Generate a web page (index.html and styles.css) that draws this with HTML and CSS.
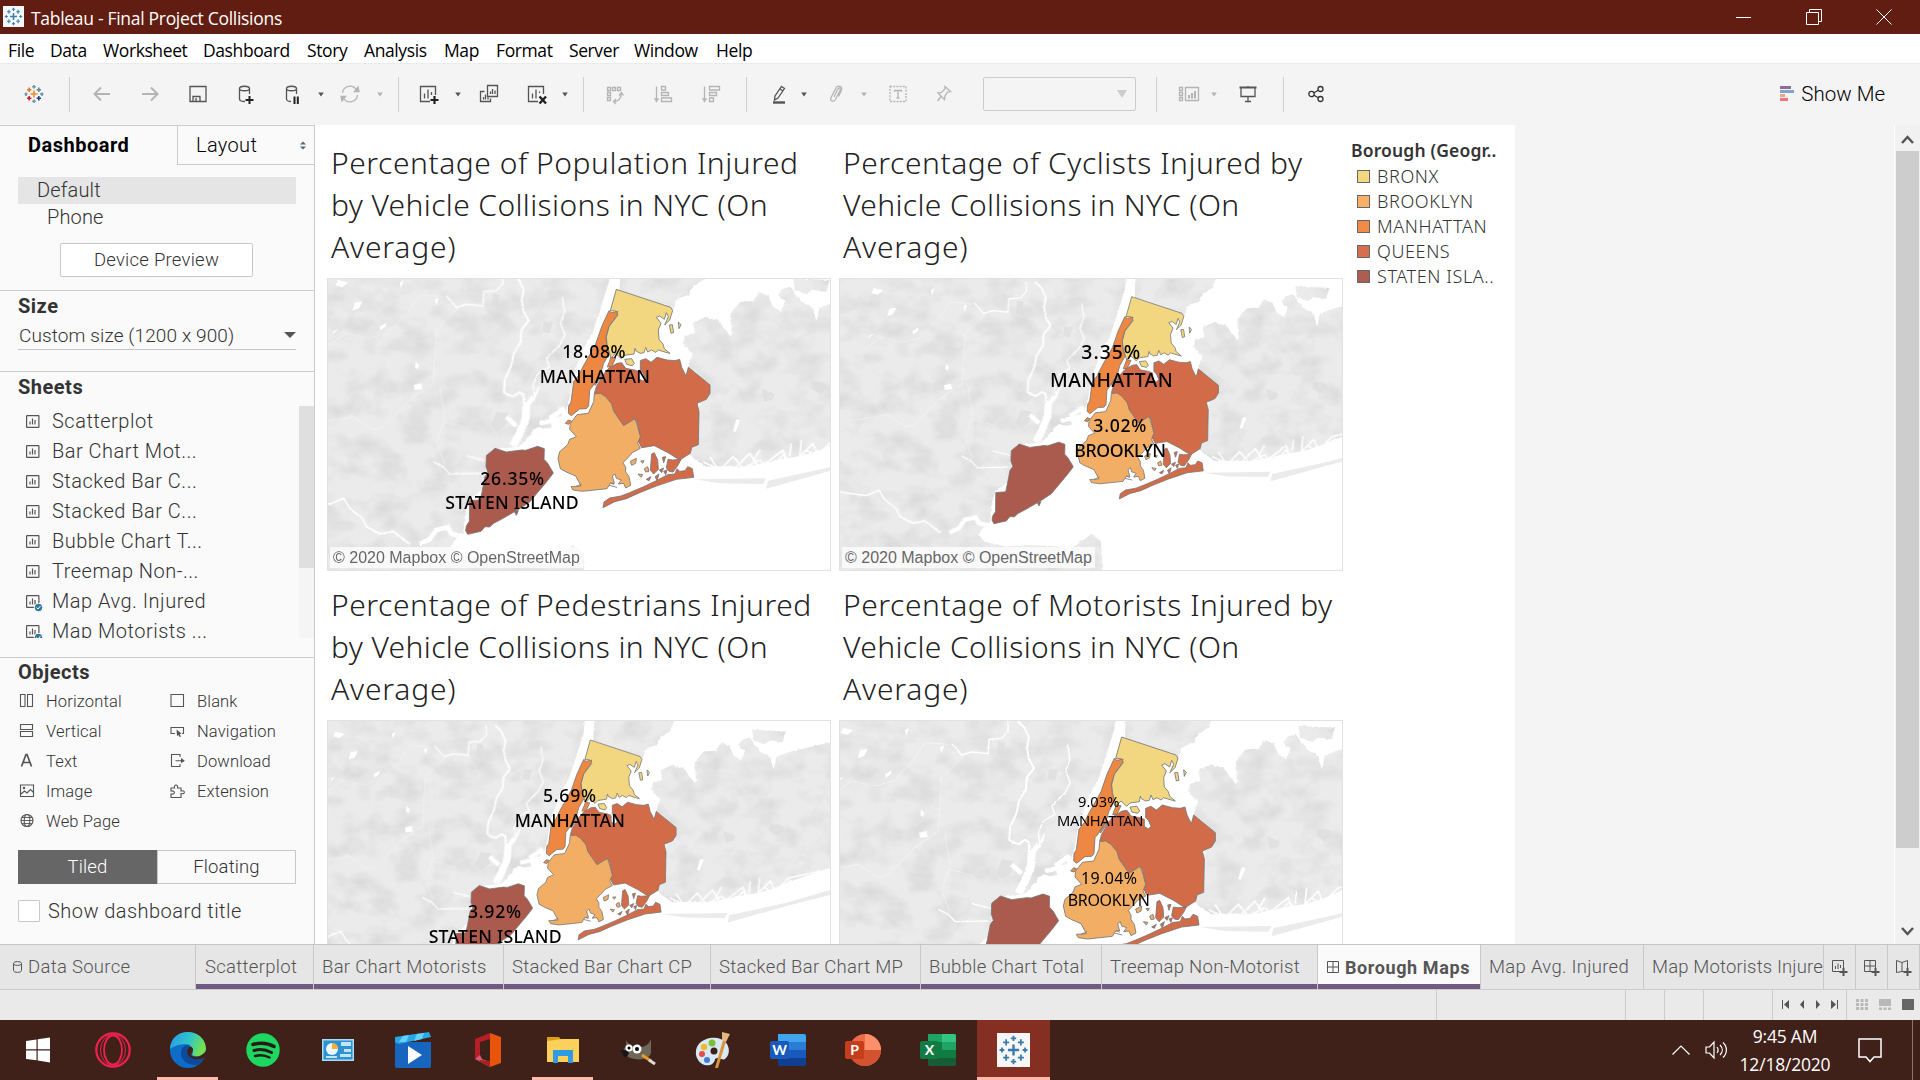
FILE: index.html
```html
<!DOCTYPE html>
<html lang="en">
<head>
<meta charset="utf-8">
<title>Tableau - Final Project Collisions</title>
<link rel="stylesheet" href="styles.css">
</head>
<body>
<svg class="defs" width="0" height="0">
  <defs>
    <filter id="terrain" x="0" y="0" width="100%" height="100%" color-interpolation-filters="sRGB">
      <feTurbulence type="fractalNoise" baseFrequency="0.09" numOctaves="3" seed="4" result="rough"/>
      <feDisplacementMap in="SourceGraphic" in2="rough" scale="9" xChannelSelector="R" yChannelSelector="G" result="land"/>
      <feTurbulence type="fractalNoise" baseFrequency="0.012 0.016" numOctaves="3" seed="9"/>
      <feColorMatrix values="0 0 0 0 0.8  0 0 0 0 0.8  0 0 0 0 0.8  1.2 0 0 0 -0.5" result="shade"/>
      <feComposite in="shade" in2="land" operator="in" result="s"/>
      <feMerge><feMergeNode in="land"/><feMergeNode in="s"/></feMerge>
    </filter>
    <filter id="coast" x="-5%" y="-5%" width="110%" height="110%">
      <feTurbulence type="fractalNoise" baseFrequency="0.12" numOctaves="2" seed="7"/>
      <feDisplacementMap in="SourceGraphic" scale="7" xChannelSelector="R" yChannelSelector="G"/>
    </filter>
    <g id="nyc">
      <g filter="url(#terrain)" fill="#ebebeb">
        <path d="M-100-60H876L868 35 846 105 820 185 790 240 763 310 748 390 738 425 715 410 728 440 690 450 700 480 650 470 600 530 520 538 500 560 500 610 492 655 448 690 436 730 432 790 412 795 395 830 412 850 480 868 560 862 700 870 760 826 790 850 800 980H-100Z"/>
        <path d="M904-60H1190L1150 30 1120 50 1105 75 1070 90 1060 125 1050 112 900 60Z"/>
        <path d="M1106 292 1116 250 1090 222 1096 198 1126 190 1120 158 1158 140 1196 152 1226 190 1242 215 1240 255 1224 225 1236 190 1232 130 1262 96 1302 92 1320 66 1345 76 1360 110 1385 125 1395 92 1375 75 1385 58 1412 50 1445 95 1480 115 1490 155 1500 112 1550 95 1700 60V470L1534 525 1480 552 1400 565 1280 590 1160 590 1110 555 1140 400 1170 345Z"/>
        <path d="M1420 24 1530 30 1520 65 1480 60 1460 72 1425 60Z"/>
      </g>
      <path d="M1125 628 1340 625 1330 642 1200 640ZM1345 632 1530 592 1690 545 1690 562 1530 603 1340 656Z" fill="#ebebeb"/>
      <g fill="#dedede" opacity=".75"><path d="M530 425 565 430 560 465 530 485 515 465ZM672 155 700 155 690 190 668 185ZM520 70 540 75 535 120 515 110ZM1325 355 1365 372 1360 388 1335 395ZM1480 335 1510 335 1525 350 1500 372 1475 355Z"/></g>
      <g fill="none" stroke="#fff" stroke-linejoin="round" filter="url(#coast)">
        <path stroke-width="6" d="M578 10 598 30 612 60 606 90 612 125 627 152 605 180 603 215 582 250 575 285 555 330 553 368 580 380 600 366 612 375 612 402 640 392 658 350"/>
        <path stroke-width="24" d="M620 405 618 445 600 490 580 528"/>
        <path stroke-width="14" d="M560 440 590 468M640 380 620 410M735 415 690 445M730 445 660 460M735 470 650 490"/>
        <path stroke-width="4" d="M380 78 410 112 440 103 490 108 492 65 530 62 550 40 548 10M728 80 735 125 722 160 736 195 720 225 680 265 690 290 655 310 640 345 645 380M340 575 370 590 390 612 490 610M440 558 500 572"/>
        <path stroke-width="1.500" opacity=".8" d="M20 230 80 190 150 205 205 190 270 120 300 75 370 80M-20 460 100 440 160 480 190 470 270 390 340 340 350 180 420 110M360 350 375 440 350 520 375 580M375 455 445 475"/>
        <path stroke-width="5" d="M-60 690 30 702 72 685 90 715 128 745 140 770 182 792 220 784 270 822"/>
        <path stroke-width="14" d="M300 822 330 808 350 780 385 772 395 792 440 800"/>
        <path stroke-width="5" d="M1150 575 1200 600 1240 560 1270 595 1320 570 1350 600 1390 555 1420 580 1460 540 1490 560 1540 510 1680 480M1160 605 1230 590 1290 610 1370 580 1440 595 1530 560 1660 520M1170 560 1190 590 1240 600 1290 550 1320 595 1390 540 1410 590 1480 520 1500 570 1550 520M1300 575 1320 540M1410 560 1414 520M1440 560 1445 510"/>
        <path stroke-width="14" d="M1140 605 1260 600 1400 580 1540 535 1690 490"/>
      </g>
      <path fill="#fff" d="M55 30 85 38 68 52 48 46ZM105 98 128 94 118 115 98 122ZM180 170 200 158 198 170 182 180ZM282 345 305 340 308 358 285 360ZM240 38 252 30 244 55ZM345 88 358 84 350 105ZM40 185 58 175 40 192ZM288 275 299 285 294 298 286 292ZM1250 448 1262 450 1248 486 1240 484Z"/>
      <g stroke="#777" stroke-width="2.6" stroke-linejoin="round">
        <path fill="#f2d780" d="M890 58 1053 112 1059 122 1050 150 1035 165 1046 140 1040 128 1034 148 1020 138 1010 142 1024 160 1016 180 1018 208 1030 222 1034 236 1051 250 1042 248 1016 240 1008 247 996 240 984 246 978 232 973 248 962 250 949 243 946 235 943 252 915 256 905 266 888 250 874 264 862 225 860 200 868 170 895 135 888 123 872 122Z"/>
        <path fill="#f2d780" d="M915 268 936 266 944 280 938 287 921 283ZM1049 165 1058 164 1062 188 1054 190ZM1076 156 1084 164 1078 176Z"/>
        <path fill="#ee8742" d="M868 122 876 128 894 124 892 136 868 168 859 200 862 230 869 250 852 280 844 308 822 345 810 360 807 408 800 416 780 417 755 437 746 430 747 408 754 396 762 335 778 315 790 290 828 222 846 170ZM874 262 888 264 876 290 863 291ZM846 308 850 312 827 346 824 341Z"/>
        <path fill="#ee8742" d="M737 460 746 450 755 453 747 463Z"/>
        <path fill="#d26b48" d="M824 370 830 350 852 312 868 294 892 280 906 278 918 295 945 300 958 305 958 326 970 334 978 326 970 308 962 300 962 272 978 266 994 277 1012 262 1042 270 1066 272 1080 268 1086 292 1099 318 1106 292 1171 345 1171 370 1160 388 1132 400 1138 425 1136 524 1116 532 1112 550 1080 570 1045 548 1004 527 966 533 954 510 962 500 952 455 944 448 910 467 886 430 870 402 856 382 842 372Z"/>
        <path fill="#f3ae66" d="M842 370 858 380 876 402 882 424 912 467 946 446 954 470 962 500 954 520 962 535 938 548 924 564 910 578 918 592 918 606 928 620 933 646 918 654 912 640 896 642 905 630 890 625 886 612 878 618 884 640 872 640 862 656 788 664 760 660 754 650 784 648 768 618 740 606 722 596 715 565 720 545 744 524 750 508 770 500 750 478 752 460 772 434 806 430 822 395 824 372Z"/>
        <path fill="#f3ae66" d="M932 574 950 565 948 580 936 586ZM955 612 969 614 964 622ZM974 596 984 590 988 604 978 606ZM963 573 973 572 969 580Z"/>
        <path fill="#d26b48" d="M996 552 1004 548 1014 570 1016 598 1002 612 992 600ZM1045 568 1058 570 1084 568 1076 584 1060 606 1048 604 1040 594ZM1019 600 1032 594 1026 608ZM1032 604 1042 600 1038 614ZM980 628 994 620 988 632ZM1006 620 1018 612 1012 632ZM1028 562 1038 560 1032 578Z"/>
        <path fill="#d26b48" d="M1072 596 1080 604 1096 602 1104 590 1118 596 1122 622 1070 628 1010 648 960 668 920 686 885 695 850 713 853 696 870 684 904 678 930 668 972 650 1010 632 1044 614 1066 612Z"/>
        <path fill="#ab5b4e" d="M500 557 526 535 560 546 606 540 618 541 654 529 674 536 673 568 684 580 701 609 682 634 630 696 600 716 545 748 522 760 510 771 496 770 484 784 444 793 438 782 440 768 449 754 450 692 482 690 488 662 496 620 505 608 499 590ZM584 724 596 722 590 736Z"/>
        <path fill="none" d="M872 638 884 644M868 646 892 652M768 650 786 642"/>
      </g>
    </g>
    <g id="tableau-mark" fill="none" stroke="currentColor">
      <path stroke-width="1.9" d="M12 7.6V16.4M7.6 12H16.4"/>
      <path stroke-width="1.4" d="M12 .8V5M9.9 2.9H14.1M12 19V23.2M9.9 21.1H14.1M2.9 10V14M1 12H4.8M21.1 10V14M19.2 12H23M6.2 3.6V8.4M3.8 6H8.6M17.8 3.6V8.4M15.4 6H20.2M6.2 15.6V20.4M3.8 18H8.6M17.8 15.6V20.4M15.4 18H20.2"/>
    </g>
    <g id="sheet" fill="none" stroke="#555" stroke-width="1.2"><rect x=".6" y=".6" width="12.3" height="11.8" rx=".5"/><path d="M4 9.5V6.5M6.5 9.5V3.6M9 9.5V5"/></g>
    <path id="caret" d="M2.200 2.500H7.800L5 6.500Z" fill="currentColor"/>
  </defs>
</svg>

<header class="titlebar">
  <span class="app-icon"><svg width="19" height="19" viewBox="0 0 24 24"><use href="#tableau-mark"/></svg></span>
  <span class="app-name">Tableau - Final Project Collisions</span>
  <div class="window-buttons">
    <svg width="16" height="16" viewBox="0 0 16 16"><path d="M0 8.5H15"/></svg>
    <svg width="16" height="16" viewBox="0 0 16 16"><path d="M.5 3.5H12.5V15.5H.5ZM3.5 3.5V.5H15.5V12.5H12.5"/></svg>
    <svg width="16" height="16" viewBox="0 0 16 16"><path d="M.5.5 15.5 15.5M15.5.5.5 15.5"/></svg>
  </div>
</header>

<nav class="menubar">
  <span class="w-file">File</span><span class="w-data">Data</span><span class="w-worksheet">Worksheet</span><span class="w-dashboard">Dashboard</span><span class="w-story">Story</span><span class="w-analysis">Analysis</span><span class="w-map">Map</span><span class="w-format">Format</span><span class="w-server">Server</span><span class="w-window">Window</span><span>Help</span>
</nav>

<div class="toolbar">
  <svg class="ico m22" viewBox="0 0 24 24"><g fill="none" stroke-width="1.6"><path stroke="#eb8b2d" d="M12 8.5V15.5M8.5 12H15.5"/><path stroke="#6b9aa8" d="M12 3V6.5M10.2 4.8H13.8M20 10.5V14M18 12H21.5"/><path stroke="#e8762c" d="M7.2 5.5V10M5 7.7H9.4"/><path stroke="#5b879b" d="M16.8 5.5V10M14.6 7.7H19"/><path stroke="#c72035" d="M7.2 14V18.5M5 16.3H9.4"/><path stroke="#1f457e" d="M16.8 14V18.5M14.6 16.3H19"/><path stroke="#7199a6" d="M12 17.5V21M10.2 19.3H13.8M4 10.5V14M2.5 12H5.5"/></g></svg>
  <i class="sep m23"></i>
  <svg class="ico dim m20" viewBox="0 0 24 24"><path stroke-width="2" d="M20 12H5M11 5.5 4.5 12 11 18.5"/></svg>
  <svg class="ico dim m24" viewBox="0 0 24 24"><path stroke-width="2" d="M4 12H19M13 5.5 19.5 12 13 18.5"/></svg>
  <svg class="ico m24" viewBox="0 0 24 24"><path d="M4 4.5H20V19.5H4ZM7 19V14.5H14V19M10 16V19"/></svg>
  <svg class="ico m24" viewBox="0 0 24 24"><path d="M5.500 6.500C5.500 3.500 15.500 3.500 15.500 6.500V12M5.500 6.500C5.500 9.500 15.500 9.500 15.500 6.500M5.500 6.500V17C5.500 18.500 8 19.500 11 19.500"/><path stroke="#222" stroke-width="2" d="M15.500 14V22M11.500 18H19.500"/></svg>
  <svg class="ico m22" viewBox="0 0 24 24"><path d="M6.500 6.500C6.500 3.500 16.500 3.500 16.500 6.500V12M6.500 6.500C6.500 9.500 16.500 9.500 16.500 6.500M6.500 6.500V17C6.500 18.500 9 19.500 11 19.500"/><path stroke="#222" stroke-width="2" d="M14.500 14.500V22M17.800 14.500V22"/></svg>
  <svg class="car m12" viewBox="0 0 10 9"><use href="#caret"/></svg>
  <svg class="ico dim m12" viewBox="0 0 24 24"><path d="M4.500 11A7.500 7.500 0 0 1 18.500 8M19.500 13A7.500 7.500 0 0 1 5.500 16"/><path fill="currentColor" d="M16.500 9.500H21L20 5ZM7.500 14.500H3L4 19Z"/></svg>
  <svg class="car dim m13" viewBox="0 0 10 9"><use href="#caret"/></svg>
  <i class="sep m13"></i>
  <svg class="ico m17" viewBox="0 0 24 24"><path d="M14 19.500H4.500V4.500H19.500V13M8.500 16.500V11.500M12 16.500V7.500M15.500 13V10"/><path stroke="#222" stroke-width="2.200" d="M18.500 14V22M14.500 18H22.500"/></svg>
  <svg class="car m13" viewBox="0 0 10 9"><use href="#caret"/></svg>
  <svg class="ico m14" viewBox="0 0 24 24"><path d="M10.500 3.500H20.500V14.500H10.500ZM7.500 9.500H3.500V19.500H13.500V16.500M13.500 12V9.500M15.500 12V7M18 12V8.500M6.500 17.500V15M8.500 17.500V12.500M11 17.500V15.500"/></svg>
  <svg class="ico m23" viewBox="0 0 24 24"><path d="M14 19.500H4.500V4.500H19.500V12M8.500 16.500V11.500M12 16.500V7.500M15.500 11V9.500"/><path stroke="#222" stroke-width="2.400" d="M15.500 14.500 22 21.500M22 14.500 15.500 21.500"/></svg>
  <svg class="car m12" viewBox="0 0 10 9"><use href="#caret"/></svg>
  <i class="sep m13"></i>
  <svg class="ico dim m19" viewBox="0 0 24 24"><path d="M4.500 5.500H7.500V8.500H4.500ZM9.500 5.500H12.500V8.500H9.500ZM14.500 5.500H17.500V8.500H14.500ZM4.500 10.500H7.500V13.500H4.500ZM4.500 15.500H7.500V18.500H4.500ZM11 19.500C15 19.500 18 17 18.500 11M16 13.500 18.500 10.500 20.500 13.500M13 17 10.500 19.500 13 22"/></svg>
  <svg class="ico dim m24" viewBox="0 0 24 24"><path d="M5.500 4.500V18M3.500 16 5.500 19.500 7.500 16M10.500 4.500H14.500V8H10.500ZM10.500 10.500H17.500V13.500H10.500ZM10.500 16H20.500V19.500H10.500Z"/></svg>
  <svg class="ico dim m24" viewBox="0 0 24 24"><path d="M5.500 4.500V18M3.500 16 5.500 19.500 7.500 16M10.500 4.500H20.500V8H10.500ZM10.500 10.500H17.500V13.500H10.500ZM10.500 16H14.500V19.500H10.500Z"/></svg>
  <i class="sep m23"></i>
  <svg class="ico m20" viewBox="0 0 24 24"><path d="M14.500 4.500 17.500 6.500 11 16 7.500 18 8 14ZM13 7 16 9"/><path stroke-width="2.400" d="M6 20.500H18"/></svg>
  <svg class="car m8" viewBox="0 0 10 9"><use href="#caret"/></svg>
  <svg class="ico dim m15" viewBox="0 0 24 24"><path d="M10 15 13.500 7.500C15 5 17 6 16 8.500L11.500 17.500C9.500 20.500 5.500 19 7 15.500L12 6C13.500 3 18.500 4 17.500 8L14.500 14.500"/></svg>
  <svg class="car dim m11" viewBox="0 0 10 9"><use href="#caret"/></svg>
  <svg class="ico dim m17" viewBox="0 0 24 24"><path stroke-dasharray="2 1.200" d="M4 4.500H20V19.500H4Z"/><path d="M8.500 10V8.500H15.500V10M12 8.500V16M10.500 16H13.500"/></svg>
  <svg class="ico dim m22" viewBox="0 0 24 24"><path d="M13 4.500 18.500 9.500 15.500 10 13 14 12.500 17.500 6 11 9.500 10.500 13 7ZM9 14.500 5.500 19"/></svg>
  <div class="fit-box m27"><svg width="12" height="9" viewBox="0 0 12 9"><path d="M1 0H11L6 8Z" fill="#ccc"/></svg></div>
  <i class="sep m20"></i>
  <svg class="ico dim m20" viewBox="0 0 24 24"><path d="M2.500 5.500H5.500V8.500H2.500ZM2.500 10.500H5.500V13.500H2.500ZM2.500 15.500H5.500V18.500H2.500ZM8.500 5.500H21.500V18.500H8.500Z"/><path stroke-width="2" d="M12 16.500V13M15 16.500V11M18 16.500V9"/></svg>
  <svg class="car dim m8" viewBox="0 0 10 9"><use href="#caret"/></svg>
  <svg class="ico m17" viewBox="0 0 24 24"><path stroke-width="2" d="M3.500 5.500H20.500"/><path d="M5 6V14.500H19V6M12 4V6M12 14.500V19.500M9 19.500H15"/></svg>
  <i class="sep m23"></i>
  <svg class="ico dark m20" viewBox="0 0 24 24"><circle cx="7.500" cy="12" r="2.700"/><circle cx="16.500" cy="7" r="2.500"/><circle cx="16.500" cy="17" r="2.500"/><path d="M10 10.700 14.300 8.200M10 13.300 14.300 15.800"/></svg>
  <div class="show-me"><svg width="15" height="17" viewBox="0 0 15 17"><path fill="#8e6e96" d="M0 0H11V3H0Z"/><path fill="#7fa5cc" d="M0 4H14V7H0Z"/><path fill="#f3a57e" d="M0 8H5V11H0Z"/><path fill="#f8717d" d="M0 12H8V15H0Z"/></svg><span>Show Me</span></div>
</div>

<main class="workspace">
  <aside class="sidebar">
    <div class="panel-tabs">
      <div class="ptab active">Dashboard</div>
      <div class="ptab other"><span>Layout</span><svg width="6" height="9" viewBox="0 0 6 9"><path fill="#567" d="M0 3.500H6L3 .5ZM0 5.500H6L3 8.500Z"/></svg></div>
    </div>
    <section class="devices">
      <div class="device selected">Default</div>
      <div class="device phone">Phone</div>
      <button class="preview">Device Preview</button>
    </section>
    <section class="size">
      <h2>Size</h2>
      <div class="size-select"><span>Custom size (1200 x 900)</span><svg width="12" height="8" viewBox="0 0 12 8"><path fill="#555" d="M0 1H12L6 7Z"/></svg></div>
    </section>
    <section class="sheets">
      <h2>Sheets</h2>
      <div class="sheet-list">
        <ul>
          <li><svg viewBox="0 0 18 17"><use href="#sheet"/></svg><span>Scatterplot</span></li>
          <li><svg viewBox="0 0 18 17"><use href="#sheet"/></svg><span>Bar Chart Mot...</span></li>
          <li><svg viewBox="0 0 18 17"><use href="#sheet"/></svg><span>Stacked Bar C...</span></li>
          <li><svg viewBox="0 0 18 17"><use href="#sheet"/></svg><span>Stacked Bar C...</span></li>
          <li><svg viewBox="0 0 18 17"><use href="#sheet"/></svg><span>Bubble Chart T...</span></li>
          <li><svg viewBox="0 0 18 17"><use href="#sheet"/></svg><span>Treemap Non-...</span></li>
          <li><svg viewBox="0 0 18 17"><use href="#sheet"/><circle cx="12.500" cy="12.500" r="4.200" fill="#35789b" stroke="#fafafa"/><path d="M10.500 12.500 12 14 14.500 11" fill="none" stroke="#fff"/></svg><span>Map Avg. Injured</span></li>
          <li><svg viewBox="0 0 18 17"><use href="#sheet"/><circle cx="12.500" cy="12.500" r="4.200" fill="#35789b" stroke="#fafafa"/><path d="M10.500 12.500 12 14 14.500 11" fill="none" stroke="#fff"/></svg><span>Map Motorists ...</span></li>
        </ul>
        <div class="list-scroll"><i></i></div>
      </div>
    </section>
    <section class="objects">
      <h2>Objects</h2>
      <div class="object-grid">
        <div><svg viewBox="0 0 16 16"><path d="M1.500 1.500H6V13.500H1.500ZM8.500 1.500H13.500V13.500H8.500Z"/></svg>Horizontal</div>
        <div><svg viewBox="0 0 16 16"><path d="M1 1.500H13.500V13.500H1Z"/></svg>Blank</div>
        <div><svg viewBox="0 0 16 16"><path d="M1.500 1.500H13.500V6.500H1.500ZM1.500 8.500H13.500V13.500H1.500Z"/></svg>Vertical</div>
        <div><svg viewBox="0 0 16 16"><path d="M5 10.500H1V4.500H13.500V10.500H12"/><path fill="#555" stroke="none" d="M6.500 6.500 11.500 10.500 9.800 11.200 11 13.500 9.500 14 8.500 12 7 13Z"/></svg>Navigation</div>
        <div><svg viewBox="0 0 16 16"><path stroke-width="1.700" d="M2.500 13.500 7 1.500H8L12.500 13.500M4 9.500H11"/></svg>Text</div>
        <div><svg viewBox="0 0 16 16"><path d="M10 4V1.500H1.500V13.500H10V11M5.500 7.700H14"/><path fill="#555" stroke="none" d="M11 5 14.800 7.700 11 10.300Z"/></svg>Download</div>
        <div><svg viewBox="0 0 16 16"><path d="M1.500 2H14.500V13.500H1.500ZM2 11 5.500 8 8 10 11.500 6.500 14 9"/><circle cx="5" cy="5" r=".7"/></svg>Image</div>
        <div><svg viewBox="0 0 16 16"><path d="M1 5H4.500C3.500 1 8.500 1 7.500 5H11V8C15.500 6.500 15.500 12 11 10.500V14.500H1V11C5.500 12 5.500 7 1 8Z"/></svg>Extension</div>
        <div><svg viewBox="0 0 16 16"><circle cx="8" cy="7.500" r="6"/><ellipse cx="8" cy="7.500" rx="2.800" ry="6"/><path d="M2 7.500H14M3 4.500H13M3 10.500H13" stroke-width=".9"/></svg>Web Page</div>
      </div>
      <div class="toggle"><span class="on">Tiled</span><span>Floating</span></div>
      <label class="check"><i></i><span>Show dashboard title</span></label>
    </section>
  </aside>

  <div class="canvas">
    <div class="dashboard">
      <div class="maps">
        <article class="card">
          <h1><span class="t1">Percentage of Population Injured</span><br><span class="t2">by Vehicle Collisions in NYC (On</span><br><span class="t3">Average)</span></h1>
          <div class="map"><svg width="502" height="291" viewBox="25 27 1506 873"><use href="#nyc"/>
            <g class="lbl s50"><text x="728" y="264" textLength="190">18.08%</text><text x="660" y="340" textLength="331">MANHATTAN</text><text x="482" y="645" textLength="191">26.35%</text><text x="377" y="718" textLength="400">STATEN ISLAND</text></g></svg>
            <span class="credit">© 2020 Mapbox © OpenStreetMap</span></div>
        </article>
        <article class="card">
          <h1><span class="t1">Percentage of Cyclists Injured by</span><br><span class="t2">Vehicle Collisions in NYC (On</span><br><span class="t3">Average)</span></h1>
          <div class="map"><svg width="502" height="291" viewBox="30 27 1506 873"><g transform="translate(80.4 26.300) scale(.9265)"><use href="#nyc"/></g>
            <g class="lbl s56"><text x="754" y="266" textLength="177">3.35%</text><text x="660" y="350" textLength="368">MANHATTAN</text></g><g class="lbl s50"><text x="790" y="486" textLength="159">3.02%</text><text x="733" y="560" textLength="275">BROOKLYN</text></g></svg>
            <span class="credit">© 2020 Mapbox © OpenStreetMap</span></div>
        </article>
        <article class="card">
          <h1><span class="t1">Percentage of Pedestrians Injured</span><br><span class="t2">by Vehicle Collisions in NYC (On</span><br><span class="t3">Average)</span></h1>
          <div class="map"><svg width="502" height="291" viewBox="25 33 1506 873"><g transform="translate(-2.800 36.900) scale(.9155)"><use href="#nyc"/></g>
            <g class="lbl s50"><text x="670" y="276" textLength="159">5.69%</text><text x="585" y="351" textLength="331">MANHATTAN</text><text x="445" y="624" textLength="159">3.92%</text><text x="327" y="699" textLength="399">STATEN ISLAND</text></g></svg></div>
        </article>
        <article class="card">
          <h1><span class="t1">Percentage of Motorists Injured by</span><br><span class="t2">Vehicle Collisions in NYC (On</span><br><span class="t3">Average)</span></h1>
          <div class="map"><svg width="502" height="291" viewBox="30 33 1506 873"><g transform="translate(-15 23)"><use href="#nyc"/></g>
            <g class="lbl s42"><text x="744" y="292" textLength="124">9.03%</text><text x="681" y="348" textLength="259">MANHATTAN</text></g><g class="lbl s46"><text x="753" y="522" textLength="168">19.04%</text><text x="713" y="588" textLength="247">BROOKLYN</text></g></svg></div>
        </article>
      </div>
      <div class="legend">
        <h3>Borough (Geogr..</h3>
        <ul><li><i class="bronx"></i>BRONX</li><li><i class="brooklyn"></i>BROOKLYN</li><li><i class="manhattan"></i>MANHATTAN</li><li><i class="queens"></i>QUEENS</li><li><i class="staten"></i>STATEN ISLA..</li></ul>
      </div>
    </div>
  </div>
  <div class="vscroll">
    <svg width="13" height="10" viewBox="0 0 13 10"><path d="M1 8 6.500 2 12 8"/></svg>
    <i></i>
    <svg width="13" height="10" viewBox="0 0 13 10"><path d="M1 2 6.500 8 12 2"/></svg>
  </div>
</main>

<div class="sheet-tabs">
  <div class="tab plain ds"><svg width="9" height="12" viewBox="0 0 9 12"><path fill="none" stroke="#555" d="M.5 2.500C.5 0 8.500 0 8.500 2.500V9.500C8.500 12 .5 12 .5 9.500ZM.5 2.500C.5 5 8.500 5 8.500 2.500"/></svg><span>Data Source</span></div>
  <div class="tab w118"><span>Scatterplot</span></div>
  <div class="tab w190"><span>Bar Chart Motorists</span></div>
  <div class="tab w207"><span>Stacked Bar Chart CP</span></div>
  <div class="tab w210"><span>Stacked Bar Chart MP</span></div>
  <div class="tab w181"><span>Bubble Chart Total</span></div>
  <div class="tab w216"><span>Treemap Non-Motorist</span></div>
  <div class="tab w163 current"><svg width="12" height="12" viewBox="0 0 12 12"><path fill="none" stroke="#555" d="M.5.5H11.500V11.500H.5ZM6 .5V11.500M.5 6H11.500"/></svg><span>Borough Maps</span></div>
  <div class="tab plain w163"><span>Map Avg. Injured</span></div>
  <div class="tab plain w180"><span>Map Motorists Injure</span></div>
  <div class="tab plain add"><svg width="16" height="16" viewBox="0 0 16 16"><path d="M8 11.500H.5V.5H11.500V8M3.500 9V6M6 9V3.500M8.500 8V5"/><path stroke-width="2" d="M11.500 8V16M7.500 12H15.500"/></svg></div>
  <div class="tab plain add"><svg width="16" height="16" viewBox="0 0 16 16"><path d="M8 11.500H.5V.5H11.500V8M.5 6H11.500M6 .5V11.500"/><path stroke-width="2" d="M11.500 8V16M7.500 12H15.500"/></svg></div>
  <div class="tab plain add"><svg width="16" height="16" viewBox="0 0 16 16"><path d="M8 11.500H6L.5 12.500V.5L6 2.500 11.500.5V8M6 2.500V11.500"/><path stroke-width="2" d="M11.500 8V16M7.500 12H15.500"/></svg></div>
</div>

<div class="statusbar">
  <i class="c1"></i><i class="c2"></i><i class="c3"></i><i class="c3"></i><i class="c4"></i>
  <div class="pager">
    <svg width="8" height="9" viewBox="0 0 8 9"><path d="M0 0H1V9H0ZM7 0V9L2 4.500Z"/></svg>
    <svg width="8" height="9" viewBox="0 0 8 9"><path d="M6 0V9L2 4.500Z"/></svg>
    <svg width="8" height="9" viewBox="0 0 8 9"><path d="M2 0V9L6 4.500Z"/></svg>
    <svg width="8" height="9" viewBox="0 0 8 9"><path d="M7 0H8V9H7ZM1 0V9L6 4.500Z"/></svg>
  </div>
  <div class="views">
    <svg width="12" height="11" viewBox="0 0 12 11"><path fill="#b8b8b8" d="M0 0H3V3H0ZM4.500 0H7.500V3H4.500ZM9 0H12V3H9ZM0 4H3V7H0ZM4.500 4H7.500V7H4.500ZM9 4H12V7H9ZM0 8H3V11H0ZM4.500 8H7.500V11H4.500ZM9 8H12V11H9Z"/></svg>
    <svg width="12" height="11" viewBox="0 0 12 11"><path fill="#b8b8b8" d="M0 0H12V7H0ZM0 8.500H3V11H0ZM4.500 8.500H7.500V11H4.500ZM9 8.500H12V11H9Z"/></svg>
    <svg width="12" height="11" viewBox="0 0 12 11"><path fill="#666" d="M0 0H12V11H0Z"/></svg>
  </div>
</div>

<footer class="taskbar">
  <div class="apps">
    <span class="app first"><svg viewBox="0 0 36 36"><path fill="#fff" d="M6 9 16.500 7.500V17.200H6ZM17.700 7.300 30 5.500V17.200H17.700ZM6 18.400H16.500V28.300L6 27ZM17.700 18.400H30V30.500L17.700 28.600Z"/></svg></span>
    <span class="app"><svg viewBox="0 0 36 36"><g fill="none" stroke="#ef2150"><circle cx="18" cy="18" r="16.700" stroke-width="2.200"/><ellipse cx="18" cy="18" rx="9" ry="14.500" stroke-width="1.800"/><ellipse cx="18" cy="18" rx="12.500" ry="15.500" stroke-width="1"/></g></svg></span>
    <span class="app open"><svg viewBox="0 0 36 36"><defs><linearGradient id="eg" x2="1" y2=".3"><stop offset=".2" stop-color="#2ba5e3"/><stop offset=".6" stop-color="#31c7c6"/><stop offset="1" stop-color="#72e151"/></linearGradient></defs><circle cx="18" cy="18" r="18" fill="#0d6dc9"/><path fill="url(#eg)" d="M0 17C1-6 34-5 36 16 36 24 27 26 22 23 27 13 14 8 0 17Z"/><path fill="#0b4a9c" d="M12 17C8 26 17 34 27 33 31 31 33 28 34 25 28 29 18 27 17 20 16 16 20 13 20 13 17 12 13 14 12 17Z"/><path fill="#3f211a" d="M17 20C17 15 21 13 23 17 23 20 20 22 22 24 27 26 32 24 36 19V24L34 26C27 29 18 27 17 20Z"/></svg></span>
    <span class="app"><svg viewBox="0 0 36 36"><circle cx="18" cy="18" r="16.700" fill="#1ed760"/><g fill="none" stroke="#2a1a14" stroke-linecap="round"><path stroke-width="3.500" d="M8 12.500C15 10.500 23 11 29 14.500"/><path stroke-width="3" d="M9 18.500C15 16.500 21 17.500 26.500 20.500"/><path stroke-width="2.500" d="M10 24C15 22.500 20 23 24.500 25.500"/></g></svg></span>
    <span class="app"><svg viewBox="0 0 36 36"><rect x="2" y="7" width="32" height="22" fill="#a9dcf7"/><rect x="3.500" y="8.500" width="29" height="19" fill="#2e91d0"/><circle cx="12" cy="17" r="6" fill="#e9f6fd"/><path fill="#f4ae35" d="M12 17V11A6 6 0 0 1 18 17Z"/><path fill="#bfe5fa" d="M21 10H31V14H21ZM24 17H31V20H24ZM20 22H31V25H20ZM6 24H17V26H6Z"/></svg></span>
    <span class="app"><svg viewBox="0 0 36 36"><path fill="#1765bd" d="M0 10H36V34Q36 36 34 36H2Q0 36 0 34Z"/><path fill="#27a9e8" d="M0 10V5L34 0 36 5 4 12Z"/><path fill="#66d0f8" d="M8 4 14 3 11 10H4ZM22 2 29 1 27 7 19 9Z"/><path fill="#fff" d="M13 14 27 23 13 32Z"/></svg></span>
    <span class="app"><svg viewBox="0 0 36 36"><path fill="#b81e27" d="M20 1 5 7V27L10 24V10L20 7Z"/><path fill="#d65c74" d="M5 27 10 23 12 27 20 30V35Z"/><path fill="#e9540d" d="M20 1 31 5V31L20 35V29Z"/><path fill="#a92117" d="M10 28 20 29V35L9 29Z"/></svg></span>
    <span class="app open"><svg viewBox="0 0 36 36"><path fill="#d8a013" d="M2 5H14L17 9H2Z"/><path fill="#fbd15b" d="M2 9 17 7H34V30H2Z"/><path fill="#2f9be4" d="M8 31V18H28V31H23V24H13V31Z"/></svg></span>
    <span class="app"><svg viewBox="0 0 36 36"><path fill="#6d6659" d="M31 7C29 13 24 16 15 15 11 13 7 11 6 8 7 15 3 17 2 21 9 28 28 31 31 21Z"/><circle cx="9" cy="16" r="3.500" fill="#fff"/><circle cx="17" cy="17" r="4.500" fill="#fff"/><circle cx="9" cy="16" r="1.500"/><circle cx="17" cy="17" r="2"/><path fill="#171717" d="M1 18Q6 17 9 21L7 25Q2 25 1 18Z"/><path stroke="#e99a2d" stroke-width="3" d="M22 23 31 29"/><path stroke="#ddd" stroke-width="3" d="M29 28 35 32"/></svg></span>
    <span class="app"><svg viewBox="0 0 36 36"><path fill="#d7e9f5" d="M15 6C34 3 38 21 30 27 27 29 24 24 20 27 19 36 4 36 1 23 0 13 6 8 15 6Z"/><circle cx="17" cy="11" r="3.500" fill="#79c335"/><circle cx="9" cy="15" r="3.200" fill="#f0b72d"/><circle cx="7" cy="22" r="3" fill="#df4d49"/><circle cx="12" cy="28" r="3" fill="#437bd3"/><circle cx="19" cy="19" r="3.500" fill="#3f211a"/><path fill="#d9923d" d="M28 8 31 9 23 36H20Z"/><path fill="#e4b77f" d="M27 0 35 2 31 10 27 8Z"/></svg></span>
    <span class="app"><svg viewBox="0 0 36 36"><path fill="#41a5ee" d="M8 2H34Q36 2 36 4V10H8Z"/><path fill="#2b7cd3" d="M8 10H36V18H8Z"/><path fill="#185abd" d="M8 18H36V26H8Z"/><path fill="#103f91" d="M8 26H36V32Q36 34 34 34H10Q8 34 8 32Z"/><rect y="9" width="19" height="18" rx="2" fill="#185abd"/><text x="9.500" y="23" class="ms">W</text></svg></span>
    <span class="app"><svg viewBox="0 0 36 36"><circle cx="20" cy="18" r="16" fill="#ed6c47"/><path fill="#ff8f6b" d="M20 2A16 16 0 0 1 36 18H20Z"/><path fill="#d35230" d="M4 18H36A16 16 0 0 1 4 18Z"/><rect y="9" width="19" height="18" rx="2" fill="#c43e1c"/><text x="9.500" y="23" class="ms">P</text></svg></span>
    <span class="app"><svg viewBox="0 0 36 36"><path fill="#21a366" d="M8 2H34Q36 2 36 4V10H8Z"/><path fill="#33c481" d="M22 2H34Q36 2 36 4V10H22Z"/><path fill="#107c41" d="M8 10H36V26H8Z"/><path fill="#21a366" d="M22 10H36V18H22Z"/><path fill="#185c37" d="M8 26H36V32Q36 34 34 34H10Q8 34 8 32Z"/><rect y="9" width="19" height="18" rx="2" fill="#107c41"/><text x="9.500" y="23" class="ms">X</text></svg></span>
    <span class="app focused"><svg class="tile" viewBox="-1 -1 26 26"><use href="#tableau-mark"/></svg></span>
  </div>
  <div class="tray">
    <svg width="18" height="10" viewBox="0 0 18 10"><path d="M.5 9.500 9 1 17.500 9.500"/></svg>
    <svg width="24" height="20" viewBox="0 0 24 20"><path d="M1 7H4.500L9 2V18L4.500 13H1ZM12 7C13.500 9 13.500 11 12 13M15 5C18 8 18 12 15 15M18 2.500C22.500 6.500 22.500 13.500 18 17.500"/></svg>
    <div class="clock"><span>9:45 AM</span><span>12/18/2020</span></div>
    <svg width="24" height="25" viewBox="0 0 24 25"><path stroke-width="1.500" d="M1 1H23V19H16L12 23.500 8 19H1Z"/></svg>
    <i></i>
  </div>
</footer>
</body>
</html>
```
FILE: styles.css
```css
* { box-sizing: border-box; }
body { margin: 0; width: 1920px; height: 1080px; overflow: hidden; display: flex; flex-direction: column; background: #f4f4f4; color: #333; font-family: Roboto, "Liberation Sans", sans-serif; font-weight: 300; }
ul { list-style: none; margin: 0; padding: 0; }
svg { display: block; flex: none; }
.defs { position: absolute; }

.titlebar { height: 34px; flex: none; background: #621d12; color: #fff; display: flex; align-items: center; padding: 0 28px 0 3px; }
.app-icon { width: 21px; height: 21px; background: #f7f7f7; color: #3480b3; display: grid; place-items: center; margin-top: -1px; }
.app-name { margin-left: 7px; font: 400 17.500px/34px "Open Sans", sans-serif; letter-spacing: -.3px; padding-top: 1px; }
.window-buttons { margin-left: auto; display: flex; gap: 54px; fill: none; stroke: #fff; }

.menubar { height: 30px; flex: none; background: #fff; border-bottom: 1px solid #ebebeb; padding-left: 8px; display: flex; font: 400 17.5px/33px "Open Sans", sans-serif; letter-spacing: -.4px; color: #000; white-space: nowrap; }
.w-file { width: 42px; } .w-data { width: 53px; } .w-worksheet { width: 100px; } .w-dashboard { width: 104px; } .w-story { width: 57px; }
.w-analysis { width: 80px; } .w-map { width: 52px; } .w-format { width: 73px; } .w-server { width: 65px; } .w-window { width: 82px; }

.toolbar { height: 61px; flex: none; background: #f4f4f4; display: flex; align-items: center; color: #555; padding-right: 35px; padding-bottom: 1px; }
.ico { width: 24px; height: 24px; fill: none; stroke: currentColor; stroke-width: 1.3; }
.car { width: 10px; height: 9px; }
.dim { color: #b4b4b4; }
.dark { color: #333; }
.sep { width: 1px; height: 35px; background: #cfcfcf; flex: none; }
.m8 { margin-left: 8px; } .m11 { margin-left: 11px; } .m12 { margin-left: 12px; } .m13 { margin-left: 13px; } .m14 { margin-left: 14px; } .m15 { margin-left: 15px; }
.m17 { margin-left: 17px; } .m19 { margin-left: 19px; } .m20 { margin-left: 20px; } .m22 { margin-left: 22px; } .m23 { margin-left: 23px; } .m24 { margin-left: 24px; } .m27 { margin-left: 27px; }
.fit-box { width: 153px; height: 34px; border: 1px solid #ccc; border-radius: 2px; display: flex; align-items: center; justify-content: flex-end; padding-right: 7px; }
.show-me { margin-left: auto; display: flex; align-items: center; gap: 6px; font-size: 20.500px; font-weight: 300; color: #000; }

.workspace { height: 820px; flex: none; display: flex; border-bottom: 1px solid #c5c5c5; }
.sidebar { width: 315px; flex: none; background: #fafafa; border: solid #ccc; border-width: 1px 1px 0 0; display: flex; flex-direction: column; letter-spacing: .35px; }
.panel-tabs { display: flex; height: 39px; font-size: 20px; line-height: 38px; color: #000; flex: none; }
.ptab.active { width: 177px; font-weight: 700; padding-left: 28px; letter-spacing: .5px; }
.ptab.other { flex: 1; border: solid #ccc; border-width: 0 0 1px 1px; padding: 0 8px 0 18px; display: flex; justify-content: space-between; align-items: center; }
.devices { height: 126px; flex: none; border-bottom: 1px solid #ccc; padding: 12px 18px 0; font-size: 20px; letter-spacing: .15px; }
.device { height: 27px; line-height: 27px; padding-left: 19px; }
.device.phone { padding-left: 29px; }
.selected { background: #e5e5e5; }
.preview { display: block; width: 193px; height: 34px; margin: 12px 0 0 42px; padding: 0; border: 1px solid #c8c8c8; border-radius: 2px; background: #fff; font: 300 18.500px Roboto, sans-serif; letter-spacing: .25px; color: #333; }
h2 { margin: 0; font-size: 20px; font-weight: 700; line-height: 30px; padding-left: 18px; color: #333; letter-spacing: .5px; }
.size { height: 81px; flex: none; border-bottom: 1px solid #ccc; }
.size-select { margin: 0 18px; height: 29px; border-bottom: 1px solid #c5c5c5; display: flex; align-items: center; justify-content: space-between; font-size: 19px; padding-left: 1px; letter-spacing: .12px; }
.sheets { height: 286px; flex: none; border-bottom: 1px solid #ccc; }
.sheet-list { height: 232px; margin-top: 4px; display: flex; justify-content: space-between; overflow: hidden; }
.sheet-list ul { padding: 0 0 0 26px; }
.sheet-list li { height: 30px; display: flex; align-items: center; gap: 8px; font-size: 20px; white-space: nowrap; letter-spacing: .5px; }
.sheet-list li svg { width: 18px; height: 17px; margin-top: 4px; }
.list-scroll { width: 15px; background: #f5f5f5; }
.list-scroll i { display: block; height: 162px; background: #dfdfdf; }
.objects { display: flex; flex-direction: column; }
.objects h2 { line-height: 28px; }
.object-grid { display: grid; grid-template-columns: 151px 1fr; grid-auto-rows: 30px; padding-left: 19px; }
.object-grid div { display: flex; align-items: center; gap: 11px; font-size: 16.500px; letter-spacing: .15px; }
.object-grid svg { width: 16px; height: 16px; fill: none; stroke: #555; stroke-width: 1.100; }
.toggle { margin: 14px 18px 0; height: 34px; display: flex; font-size: 18.500px; line-height: 32px; text-align: center; letter-spacing: .15px; }
.toggle span { flex: 1; border: 1px solid #c8c8c8; }
.toggle .on { background: #666; color: #fff; border-color: #666; }
.check { display: flex; align-items: center; gap: 8px; margin: 15px 0 0 18px; font-size: 20px; letter-spacing: .45px; }
.check i { width: 22px; height: 22px; border: 1px solid #c8c8c8; background: #fff; border-radius: 1px; }

.canvas { flex: 1; overflow: hidden; background: #f4f4f4; }
.dashboard { width: 1200px; height: 819px; background: #fff; overflow: hidden; display: flex; }
.maps { width: 1028px; flex: none; padding: 18px 0 0 12px; display: grid; grid-template-columns: 504px 504px; grid-template-rows: 428px 428px; column-gap: 8px; row-gap: 14px; }
.card h1 { margin: -1px 0 0; height: 136px; padding-left: 4px; font: 300 30px/42px "Noto Sans", "Open Sans", sans-serif; color: #222; white-space: nowrap; }
.t1 { letter-spacing: .54px; } .t2 { letter-spacing: .38px; } .t3 { letter-spacing: .8px; }
.map { width: 504px; height: 293px; border: 1px solid #e2e2e2; background: #fff; position: relative; overflow: hidden; }
.credit { position: absolute; left: 2px; bottom: 2px; height: 21px; padding: 0 3px; background: rgba(255,255,255,.75); font: 400 16px/21px "Liberation Sans", sans-serif; color: #666; white-space: nowrap; }
.lbl { font-family: "Noto Sans", sans-serif; font-weight: 400; fill: #000; }
.s42 { font-size: 44px; } .s46 { font-size: 48px; } .s50 { font-size: 53px; font-weight: 500; } .s56 { font-size: 58px; font-weight: 500; }
.legend { padding: 12px 0 0 8px; font: 300 18px/25px "Noto Sans", sans-serif; color: #333; }
.legend h3 { margin: 0; font-size: 17.500px; font-weight: 600; line-height: 26px; letter-spacing: .15px; }
.legend ul { margin-top: 1px; }
.legend li { height: 25px; display: flex; align-items: center; gap: 7px; margin-left: 6px; white-space: nowrap; letter-spacing: .6px; }
.legend i { width: 13px; height: 13px; border: 1px solid #666; }
.bronx { background: #f4d881; } .brooklyn { background: #f7b065; } .manhattan { background: #f28b48; } .queens { background: #d66f4b; } .staten { background: #ae5e51; }
.vscroll { width: 26px; flex: none; border-left: 1px solid #fff; background: #f1f1f1; display: flex; flex-direction: column; align-items: center; padding-top: 10px; }
.vscroll svg { fill: none; stroke: #555; stroke-width: 2.500; }
.vscroll i { width: 23px; height: 697px; margin: 6px 0 78px; background: #cdcdcd; }

.sheet-tabs { height: 45px; flex: none; display: flex; background: #e6e6e6; border-bottom: 1px solid #ccc; font-size: 18.500px; letter-spacing: .3px; color: #555; }
.tab { flex: none; border-right: 1px solid #c8c8c8; padding-left: 8px; display: flex; align-items: center; white-space: nowrap; overflow: hidden; box-shadow: inset 0 -5px #705a82; }
.plain { box-shadow: none; }
.ds { width: 196px; padding-left: 13px; gap: 6px; }
.w118.tab { padding-left: 9px; }
.current { background: #fafafa; gap: 6px; padding-left: 9px; font-weight: 700; font-size: 18px; letter-spacing: .6px; }
.w118 { width: 118px; } .w190 { width: 190px; } .w207 { width: 207px; } .w210 { width: 210px; } .w181 { width: 181px; } .w216 { width: 216px; } .w163 { width: 163px; } .w180 { width: 180px; }
.w180 { letter-spacing: .15px; }
.add { width: 32px; padding-left: 8px; }
.add svg { fill: none; stroke: #555; margin-top: 1px; }

.statusbar { height: 30px; flex: none; background: #eaeaea; display: flex; align-items: center; }
.statusbar i { height: 30px; border-right: 1px solid #ccc; }
.c1 { width: 1437px; } .c2 { width: 189px; } .c3 { width: 39px; } .c4 { width: 69px; }
.pager { width: 74px; height: 30px; border-right: 1px solid #ccc; display: flex; align-items: center; gap: 8px; padding: 0 0 2px 9px; fill: #555; }
.views { display: flex; gap: 11px; padding: 0 0 2px 9px; }

.taskbar { height: 60px; flex: none; background: #3f211a; display: flex; justify-content: space-between; }
.apps { display: flex; }
.app { width: 75px; height: 60px; display: grid; place-items: center; }
.app svg { width: 36px; height: 36px; }
.open { background: linear-gradient(#ffb9ad, #ffb9ad) center bottom / 61px 3px no-repeat; }
.focused { background: #852f22; border-bottom: 3px solid #ffb9ad; width: 73px; margin-left: 2px; padding-top: 2px; }
.app .tile { width: 33px; height: 34px; background: #f7f7f7; color: #3a7ca8; }
.ms { font: 700 14px Lato, sans-serif; fill: #fff; text-anchor: middle; }
.tray { display: flex; align-items: center; color: #fff; fill: none; stroke: #fff; stroke-width: 1.200; padding-right: 7px; }
.tray svg:nth-child(2) { margin-left: 15px; }
.clock { width: 98px; margin-left: 7px; text-align: center; font: 400 17.500px/28px "Open Sans", sans-serif; letter-spacing: -.2px; stroke: none; display: flex; flex-direction: column; padding-bottom: 0; }
.clock + svg { margin-left: 24px; }
.tray i { width: 1px; height: 60px; background: #8c7570; margin-left: 30px; }
```
